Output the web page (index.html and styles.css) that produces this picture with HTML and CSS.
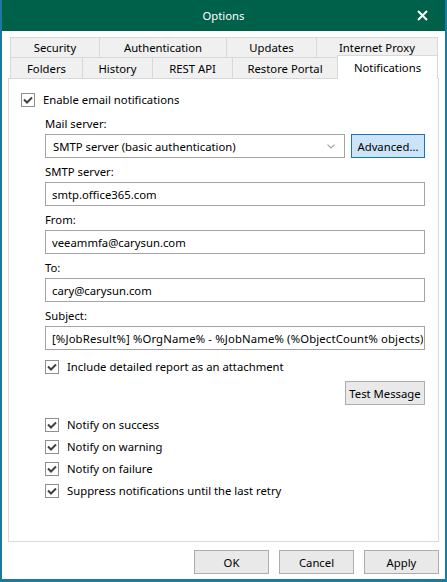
FILE: index.html
```html
<!DOCTYPE html>
<html lang="en">
<head>
  <meta charset="UTF-8" />
  <title>Options</title>
  <link rel="stylesheet" href="styles.css">
</head>
<body>

  <div class="window">

    <div class="titlebar">
      <span></span>
      <span class="title">Options</span>
      <button class="close-btn" aria-label="Close">
        <svg width="11" height="11" viewBox="0 0 11 11">
          <path d="M1 1 L10 10 M10 1 L1 10" stroke="#fff" stroke-width="2" fill="none"/>
        </svg>
      </button>
    </div>

    <div class="client">

      <div class="tabs">
        <div class="tab-row row-back">
          <div class="tab">Security</div>
          <div class="tab">Authentication</div>
          <div class="tab">Updates</div>
          <div class="tab">Internet Proxy</div>
        </div>
        <div class="tab-row row-front">
          <div class="tab">Folders</div>
          <div class="tab">History</div>
          <div class="tab">REST API</div>
          <div class="tab">Restore Portal</div>
          <div class="tab active">Notifications</div>
        </div>
      </div>

      <div class="panel">
        <label class="check-row">
          <span class="checkbox"><svg width="12" height="12" viewBox="0 0 12 12"><path d="M2 5.5 L5 8.5 L10 3.5" stroke="#404040" stroke-width="2" fill="none"/></svg></span>
          Enable email notifications
        </label>

        <div class="settings">
          <div class="field-label first">Mail server:</div>
          <div class="server-row">
            <div class="combo">
              <span>SMTP server (basic authentication)</span>
              <svg width="8" height="5" viewBox="0 0 8 5"><path d="M0.5 0.6 L4 4 L7.5 0.6" stroke="#a3a3a3" stroke-width="1.2" fill="none"/></svg>
            </div>
            <button class="btn btn-default">Advanced...</button>
          </div>

          <div class="field-label">SMTP server:</div>
          <input class="textbox" type="text" value="smtp.office365.com" />

          <div class="field-label">From:</div>
          <input class="textbox" type="text" value="veeammfa@carysun.com" />

          <div class="field-label">To:</div>
          <input class="textbox" type="text" value="cary@carysun.com" />

          <div class="field-label">Subject:</div>
          <input class="textbox subject" type="text" value="[%JobResult%] %OrgName% - %JobName% (%ObjectCount% objects)" />

          <label class="check-row include">
            <span class="checkbox"><svg width="12" height="12" viewBox="0 0 12 12"><path d="M2 5.5 L5 8.5 L10 3.5" stroke="#404040" stroke-width="2" fill="none"/></svg></span>
            Include detailed report as an attachment
          </label>

          <div class="test-row">
            <button class="btn">Test Message</button>
          </div>

          <div class="notify-list">
            <label class="check-row">
              <span class="checkbox"><svg width="12" height="12" viewBox="0 0 12 12"><path d="M2 5.5 L5 8.5 L10 3.5" stroke="#404040" stroke-width="2" fill="none"/></svg></span>
              Notify on success
            </label>
            <label class="check-row">
              <span class="checkbox"><svg width="12" height="12" viewBox="0 0 12 12"><path d="M2 5.5 L5 8.5 L10 3.5" stroke="#404040" stroke-width="2" fill="none"/></svg></span>
              Notify on warning
            </label>
            <label class="check-row">
              <span class="checkbox"><svg width="12" height="12" viewBox="0 0 12 12"><path d="M2 5.5 L5 8.5 L10 3.5" stroke="#404040" stroke-width="2" fill="none"/></svg></span>
              Notify on failure
            </label>
            <label class="check-row">
              <span class="checkbox"><svg width="12" height="12" viewBox="0 0 12 12"><path d="M2 5.5 L5 8.5 L10 3.5" stroke="#404040" stroke-width="2" fill="none"/></svg></span>
              Suppress notifications until the last retry
            </label>
          </div>
        </div>
      </div>

      <div class="footer">
        <button class="btn">OK</button>
        <button class="btn">Cancel</button>
        <button class="btn">Apply</button>
      </div>

    </div>
  </div>

</body>
</html>
```

FILE: styles.css
```css
:root {
  --title-green: #00614b;
  --frame: #1a7aa0;
  --tab-border: #d9d9d9;
  --tab-bg: #f0f0f0;
  --field-border: #a4a4a4;
  --btn-bg: #e9e9e9;
  --btn-border: #adadad;
}

* {
  box-sizing: border-box;
}

body {
  margin: 0;
  font-family: "Noto Sans", sans-serif;
  font-size: 11.3px;
  color: #000;
  background: #fff;
}

.window {
  width: 447px;
  height: 582px;
  border: 2px solid var(--frame);
  border-top: 0;
  border-bottom-width: 3px;
  display: flex;
  flex-direction: column;
}

/* title bar */
.titlebar {
  height: 31px;
  flex: none;
  background: var(--title-green);
  color: #fff;
  display: grid;
  grid-template-columns: 46px 1fr 46px;
  align-items: center;
}

.title {
  text-align: center;
}

.close-btn {
  width: 46px;
  height: 31px;
  padding: 0;
  border: 0;
  background: none;
  display: flex;
  align-items: center;
  justify-content: center;
}

.client {
  flex: 1;
  display: flex;
  flex-direction: column;
  padding: 6px 6px 5px;
  background: #fff;
}

/* tab strip, two rows */
.tabs {
  margin: 0 1px 0 2px;
}

.tab-row {
  display: grid;
}

.row-back {
  grid-template-columns: 89px 127px 90px 122px;
  height: 20px;
}

.row-front {
  grid-template-columns: 72px 70px 80px 105px 101px;
  height: 21px;
}

.tab {
  border-top: 1px solid var(--tab-border);
  border-left: 1px solid var(--tab-border);
  background: var(--tab-bg);
  display: flex;
  align-items: center;
  justify-content: center;
  white-space: nowrap;
}

.tab:last-child {
  border-right: 1px solid var(--tab-border);
}

.tab.active {
  background: #fff;
  margin: -2px 0 -1px;
  position: relative;
  z-index: 1;
}

/* page body */
.panel {
  flex: 1;
  border: 1px solid var(--tab-border);
  padding: 13px 13px 0 12px;
  display: flex;
  flex-direction: column;
}

.check-row {
  display: flex;
  align-items: center;
  gap: 8px;
  height: 16px;
  line-height: 16px;
  white-space: nowrap;
}

.checkbox {
  width: 14px;
  height: 14px;
  flex: none;
  border: 1px solid #8f8f8f;
  background: #fff;
  display: flex;
  align-items: center;
  justify-content: center;
}

.settings {
  margin-left: 24px;
  display: flex;
  flex-direction: column;
}

.field-label {
  margin: 6px 0 2px;
  line-height: 16px;
}

.field-label.first {
  margin-top: 8px;
}

.textbox {
  width: 100%;
  height: 24px;
  margin: 0;
  padding: 0 6px;
  border: 1px solid var(--field-border);
  font: inherit;
  color: #000;
  background: #fff;
  outline: none;
}

/* the subject template runs to the right edge of its box */
.subject {
  padding-right: 1px;
  letter-spacing: 0.15px;
}

.server-row {
  display: flex;
  gap: 6px;
}

.combo {
  flex: 1;
  height: 24px;
  border: 1px solid var(--field-border);
  padding: 0 9px 0 7px;
  display: flex;
  align-items: center;
  justify-content: space-between;
}

.btn {
  height: 24px;
  padding: 0;
  border: 1px solid var(--btn-border);
  background: var(--btn-bg);
  font: inherit;
  color: #000;
}

.btn-default {
  width: 74px;
  background: #cce4f7;
  border-color: #1e73be;
}

.include {
  margin-top: 9px;
}

.test-row {
  display: flex;
  justify-content: flex-end;
  margin-top: 6px;
}

.test-row .btn {
  width: 80px;
}

.notify-list {
  margin-top: 12px;
  display: flex;
  flex-direction: column;
  gap: 6px;
}

/* dialog buttons */
.footer {
  flex: none;
  display: flex;
  justify-content: flex-end;
  gap: 10px;
  padding-top: 8px;
}

.footer .btn {
  width: 75px;
}
```
